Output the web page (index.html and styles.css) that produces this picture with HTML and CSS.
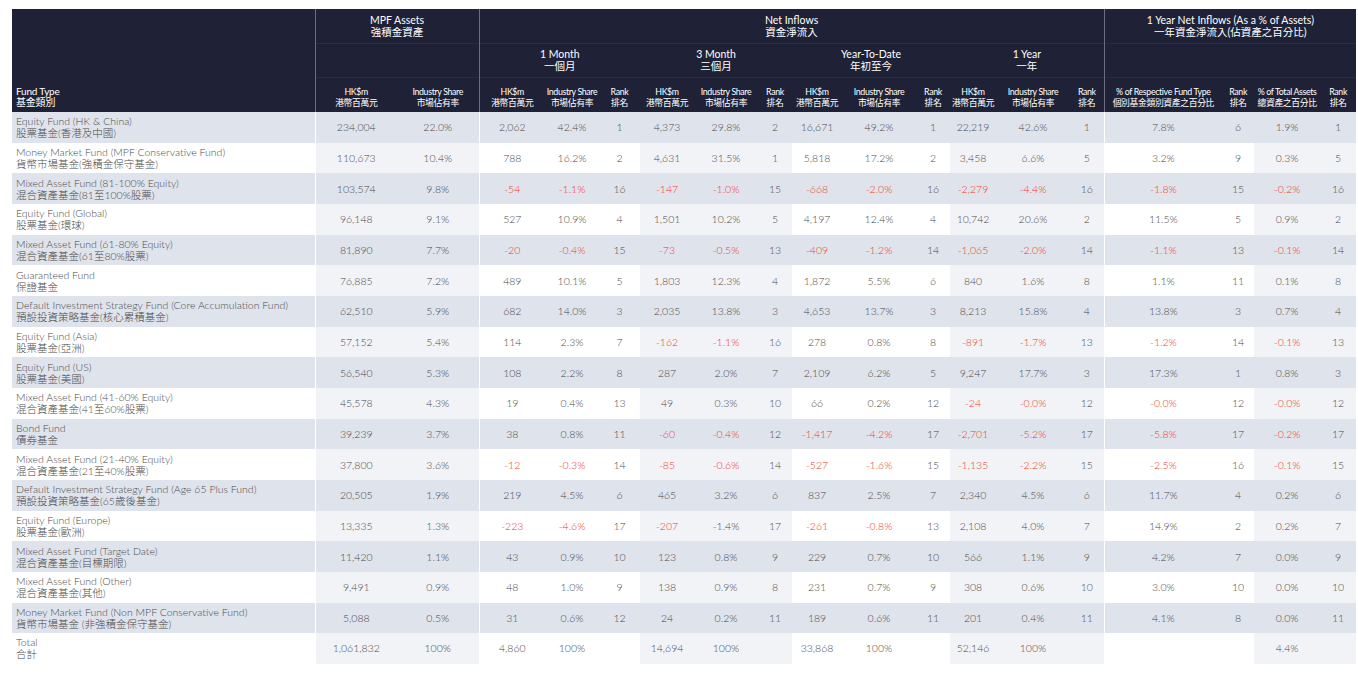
FILE: index.html
```html
<!DOCTYPE html>
<html lang="zh-Hant">
<head>
<meta charset="utf-8">
<title>MPF Fund Flows</title>
<link rel="stylesheet" href="styles.css">
</head>
<body>
<table class="flows">
  <colgroup>
    <col class="w-ft">
    <col class="w82 sh"><col class="w82 sh">
    <col class="w66"><col class="w54"><col class="w41">
    <col class="w54 sh"><col class="w64 sh"><col class="w34 sh">
    <col class="w50"><col class="w74"><col class="w34">
    <col class="w46 sh"><col class="w74 sh"><col class="w34 sh">
    <col class="w118"><col class="w32">
    <col class="w66 sh"><col class="w36 sh">
  </colgroup>
  <thead>
    <tr class="h1">
      <th rowspan="3" class="ft">Fund Type<br>基金類別</th>
      <th colspan="2" class="gl">MPF Assets<br>強積金資產</th>
      <th colspan="12" class="gl">Net Inflows<br>資金淨流入</th>
      <th colspan="4" class="gl">1 Year Net Inflows (As a % of Assets)<br>一年資金淨流入(佔資產之百分比)</th>
    </tr>
    <tr class="h2">
      <th colspan="2" class="gl"></th>
      <th colspan="3" class="gl">1 Month<br>一個月</th>
      <th colspan="3">3 Month<br>三個月</th>
      <th colspan="3">Year-To-Date<br>年初至今</th>
      <th colspan="3">1 Year<br>一年</th>
      <th colspan="4" class="gl"></th>
    </tr>
    <tr class="h3">
      <th class="gl">HK$m<br>港幣百萬元</th><th>Industry Share<br>市場佔有率</th>
      <th class="gl">HK$m<br>港幣百萬元</th><th>Industry Share<br>市場佔有率</th><th>Rank<br>排名</th>
      <th>HK$m<br>港幣百萬元</th><th>Industry Share<br>市場佔有率</th><th>Rank<br>排名</th>
      <th>HK$m<br>港幣百萬元</th><th>Industry Share<br>市場佔有率</th><th>Rank<br>排名</th>
      <th>HK$m<br>港幣百萬元</th><th>Industry Share<br>市場佔有率</th><th>Rank<br>排名</th>
      <th class="gl">% of Respective Fund Type<br>個別基金類別資產之百分比</th><th>Rank<br>排名</th>
      <th>% of Total Assets<br>總資產之百分比</th><th>Rank<br>排名</th>
    </tr>
  </thead>
  <tbody>
    <tr class="odd"><td>Equity Fund (HK &amp; China)<br>股票基金(香港及中國)</td><td>234,004</td><td>22.0%</td><td>2,062</td><td>42.4%</td><td>1</td><td>4,373</td><td>29.8%</td><td>2</td><td>16,671</td><td>49.2%</td><td>1</td><td>22,219</td><td>42.6%</td><td>1</td><td>7.8%</td><td>6</td><td>1.9%</td><td>1</td></tr>
    <tr><td>Money Market Fund (MPF Conservative Fund)<br>貨幣市場基金(強積金保守基金)</td><td>110,673</td><td>10.4%</td><td>788</td><td>16.2%</td><td>2</td><td>4,631</td><td>31.5%</td><td>1</td><td>5,818</td><td>17.2%</td><td>2</td><td>3,458</td><td>6.6%</td><td>5</td><td>3.2%</td><td>9</td><td>0.3%</td><td>5</td></tr>
    <tr class="odd"><td>Mixed Asset Fund (81-100% Equity)<br>混合資產基金(81至100%股票)</td><td>103,574</td><td>9.8%</td><td class="neg">-54</td><td class="neg">-1.1%</td><td>16</td><td class="neg">-147</td><td class="neg">-1.0%</td><td>15</td><td class="neg">-668</td><td class="neg">-2.0%</td><td>16</td><td class="neg">-2,279</td><td class="neg">-4.4%</td><td>16</td><td class="neg">-1.8%</td><td>15</td><td class="neg">-0.2%</td><td>16</td></tr>
    <tr><td>Equity Fund (Global)<br>股票基金(環球)</td><td>96,148</td><td>9.1%</td><td>527</td><td>10.9%</td><td>4</td><td>1,501</td><td>10.2%</td><td>5</td><td>4,197</td><td>12.4%</td><td>4</td><td>10,742</td><td>20.6%</td><td>2</td><td>11.5%</td><td>5</td><td>0.9%</td><td>2</td></tr>
    <tr class="odd"><td>Mixed Asset Fund (61-80% Equity)<br>混合資產基金(61至80%股票)</td><td>81,890</td><td>7.7%</td><td class="neg">-20</td><td class="neg">-0.4%</td><td>15</td><td class="neg">-73</td><td class="neg">-0.5%</td><td>13</td><td class="neg">-409</td><td class="neg">-1.2%</td><td>14</td><td class="neg">-1,065</td><td class="neg">-2.0%</td><td>14</td><td class="neg">-1.1%</td><td>13</td><td class="neg">-0.1%</td><td>14</td></tr>
    <tr><td>Guaranteed Fund<br>保證基金</td><td>76,885</td><td>7.2%</td><td>489</td><td>10.1%</td><td>5</td><td>1,803</td><td>12.3%</td><td>4</td><td>1,872</td><td>5.5%</td><td>6</td><td>840</td><td>1.6%</td><td>8</td><td>1.1%</td><td>11</td><td>0.1%</td><td>8</td></tr>
    <tr class="odd"><td>Default Investment Strategy Fund (Core Accumulation Fund)<br>預設投資策略基金(核心累積基金)</td><td>62,510</td><td>5.9%</td><td>682</td><td>14.0%</td><td>3</td><td>2,035</td><td>13.8%</td><td>3</td><td>4,653</td><td>13.7%</td><td>3</td><td>8,213</td><td>15.8%</td><td>4</td><td>13.8%</td><td>3</td><td>0.7%</td><td>4</td></tr>
    <tr><td>Equity Fund (Asia)<br>股票基金(亞洲)</td><td>57,152</td><td>5.4%</td><td>114</td><td>2.3%</td><td>7</td><td class="neg">-162</td><td class="neg">-1.1%</td><td>16</td><td>278</td><td>0.8%</td><td>8</td><td class="neg">-891</td><td class="neg">-1.7%</td><td>13</td><td class="neg">-1.2%</td><td>14</td><td class="neg">-0.1%</td><td>13</td></tr>
    <tr class="odd"><td>Equity Fund (US)<br>股票基金(美國)</td><td>56,540</td><td>5.3%</td><td>108</td><td>2.2%</td><td>8</td><td>287</td><td>2.0%</td><td>7</td><td>2,109</td><td>6.2%</td><td>5</td><td>9,247</td><td>17.7%</td><td>3</td><td>17.3%</td><td>1</td><td>0.8%</td><td>3</td></tr>
    <tr><td>Mixed Asset Fund (41-60% Equity)<br>混合資產基金(41至60%股票)</td><td>45,578</td><td>4.3%</td><td>19</td><td>0.4%</td><td>13</td><td>49</td><td>0.3%</td><td>10</td><td>66</td><td>0.2%</td><td>12</td><td class="neg">-24</td><td class="neg">-0.0%</td><td>12</td><td class="neg">-0.0%</td><td>12</td><td class="neg">-0.0%</td><td>12</td></tr>
    <tr class="odd"><td>Bond Fund<br>債券基金</td><td>39,239</td><td>3.7%</td><td>38</td><td>0.8%</td><td>11</td><td class="neg">-60</td><td class="neg">-0.4%</td><td>12</td><td class="neg">-1,417</td><td class="neg">-4.2%</td><td>17</td><td class="neg">-2,701</td><td class="neg">-5.2%</td><td>17</td><td class="neg">-5.8%</td><td>17</td><td class="neg">-0.2%</td><td>17</td></tr>
    <tr><td>Mixed Asset Fund (21-40% Equity)<br>混合資產基金(21至40%股票)</td><td>37,800</td><td>3.6%</td><td class="neg">-12</td><td class="neg">-0.3%</td><td>14</td><td class="neg">-85</td><td class="neg">-0.6%</td><td>14</td><td class="neg">-527</td><td class="neg">-1.6%</td><td>15</td><td class="neg">-1,135</td><td class="neg">-2.2%</td><td>15</td><td class="neg">-2.5%</td><td>16</td><td class="neg">-0.1%</td><td>15</td></tr>
    <tr class="odd"><td>Default Investment Strategy Fund (Age 65 Plus Fund)<br>預設投資策略基金(65歲後基金)</td><td>20,505</td><td>1.9%</td><td>219</td><td>4.5%</td><td>6</td><td>465</td><td>3.2%</td><td>6</td><td>837</td><td>2.5%</td><td>7</td><td>2,340</td><td>4.5%</td><td>6</td><td>11.7%</td><td>4</td><td>0.2%</td><td>6</td></tr>
    <tr><td>Equity Fund (Europe)<br>股票基金(歐洲)</td><td>13,335</td><td>1.3%</td><td class="neg">-223</td><td class="neg">-4.6%</td><td>17</td><td class="neg">-207</td><td>-1.4%</td><td>17</td><td class="neg">-261</td><td class="neg">-0.8%</td><td>13</td><td>2,108</td><td>4.0%</td><td>7</td><td>14.9%</td><td>2</td><td>0.2%</td><td>7</td></tr>
    <tr class="odd"><td>Mixed Asset Fund (Target Date)<br>混合資產基金(目標期限)</td><td>11,420</td><td>1.1%</td><td>43</td><td>0.9%</td><td>10</td><td>123</td><td>0.8%</td><td>9</td><td>229</td><td>0.7%</td><td>10</td><td>566</td><td>1.1%</td><td>9</td><td>4.2%</td><td>7</td><td>0.0%</td><td>9</td></tr>
    <tr><td>Mixed Asset Fund (Other)<br>混合資產基金(其他)</td><td>9,491</td><td>0.9%</td><td>48</td><td>1.0%</td><td>9</td><td>138</td><td>0.9%</td><td>8</td><td>231</td><td>0.7%</td><td>9</td><td>308</td><td>0.6%</td><td>10</td><td>3.0%</td><td>10</td><td>0.0%</td><td>10</td></tr>
    <tr class="odd"><td>Money Market Fund (Non MPF Conservative Fund)<br>貨幣市場基金 (非強積金保守基金)</td><td>5,088</td><td>0.5%</td><td>31</td><td>0.6%</td><td>12</td><td>24</td><td>0.2%</td><td>11</td><td>189</td><td>0.6%</td><td>11</td><td>201</td><td>0.4%</td><td>11</td><td>4.1%</td><td>8</td><td>0.0%</td><td>11</td></tr>
    <tr><td>Total<br>合計</td><td>1,061,832</td><td>100%</td><td>4,860</td><td>100%</td><td></td><td>14,694</td><td>100%</td><td></td><td>33,868</td><td>100%</td><td></td><td>52,146</td><td>100%</td><td></td><td></td><td></td><td>4.4%</td><td></td></tr>
  </tbody>
</table>
</body>
</html>
```

FILE: styles.css
```css
html, body {
  margin: 0;
  padding: 0;
  background: #ffffff;
}

body {
  font-family: Lato, "Noto Sans CJK TC", sans-serif;
}

.flows {
  margin: 9px 0 0 12px;
  width: 1344px;
  table-layout: fixed;
  border-collapse: collapse;
  border-spacing: 0;
}

.w-ft { width: 303px; }
.w82 { width: 82px; }
.w66 { width: 66px; }
.w64 { width: 64px; }
.w54 { width: 54px; }
.w50 { width: 50px; }
.w46 { width: 46px; }
.w41 { width: 41px; }
.w74 { width: 74px; }
.w36 { width: 36px; }
.w34 { width: 34px; }
.w32 { width: 32px; }
.w118 { width: 118px; }

col.sh { background: #f2f3f7; }

/* header */
.flows th {
  background: #1f2236;
  color: #ffffff;
  font-weight: 400;
  padding: 0;
  text-align: center;
  vertical-align: middle;
  white-space: nowrap;
  overflow: hidden;
}

.flows th.gl { border-left: 1px solid #6a6d7e; }

.h1 { height: 34px; }
.h2 { height: 34px; }
.h3 { height: 35px; }

.h1 th, .h2 th {
  font-size: 10.5px;
  line-height: 12px;
}

.h2 th, .h3 th { border-top: 1px solid #2a2e42; }

.h3 th {
  font-size: 8.8px;
  line-height: 11px;
  letter-spacing: -0.35px;
  vertical-align: bottom;
  padding-bottom: 4px;
}

.flows th.ft {
  text-align: left;
  vertical-align: bottom;
  font-size: 10px;
  line-height: 11px;
  padding: 0 0 4px 4px;
  letter-spacing: -0.2px;
}

/* body */
.flows tbody tr { height: 30.67px; }

.flows tbody tr.odd { background: #dfe3ec; }

.flows td {
  padding: 0;
  text-align: center;
  vertical-align: middle;
  color: #4a4a4a;
  font-size: 10.5px;
  font-weight: 300;
  line-height: 12px;
  white-space: nowrap;
}

.flows td:first-child {
  text-align: left;
  padding-left: 4px;
}

.flows td:nth-child(2),
.flows td:nth-child(4),
.flows td:nth-child(16) {
  border-left: 1px solid #ffffff;
}

.flows td.neg { color: #f0392b; }
```
